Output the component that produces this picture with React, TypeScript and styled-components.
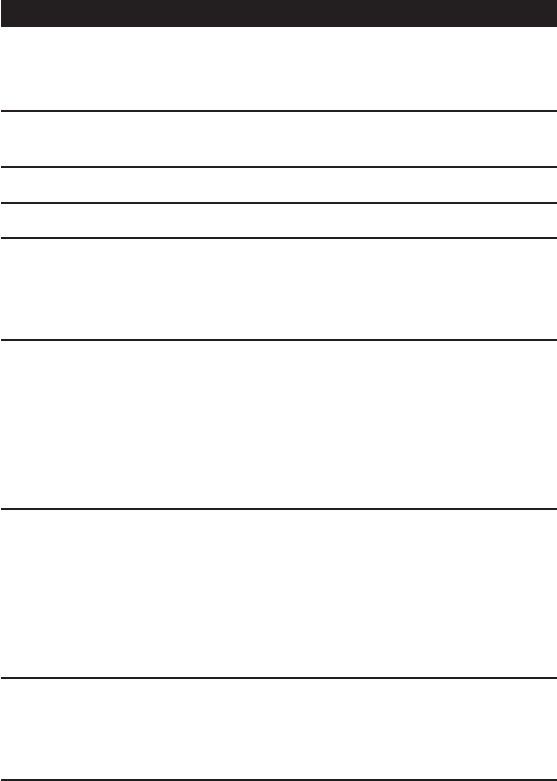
import React from "react";
import styled, { createGlobalStyle } from "styled-components";

const Global = createGlobalStyle`
  html, body { margin: 0; padding: 0; background: #ffffff; }
  body { font-family: "Liberation Sans", Arial, sans-serif; }
`;

const Page = styled.div`
  width: 557px;
  padding-left: 1px;
  box-sizing: border-box;
  display: flex;
  flex-direction: column;
`;

const HeaderBar = styled.header`
  height: 27px;
  background: #231f20;
`;

const Row = styled.section<{ $h: number }>`
  height: ${(p) => p.$h}px;
  box-sizing: border-box;
  border-bottom: 2px solid #231f20;
`;

const rows = [85, 56, 36, 35, 102, 169, 169, 102];

export default function App() {
  return (
    <>
      <Global />
      <Page>
        <HeaderBar />
        {rows.map((h, i) => (
          <Row key={i} $h={h} />
        ))}
      </Page>
    </>
  );
}
